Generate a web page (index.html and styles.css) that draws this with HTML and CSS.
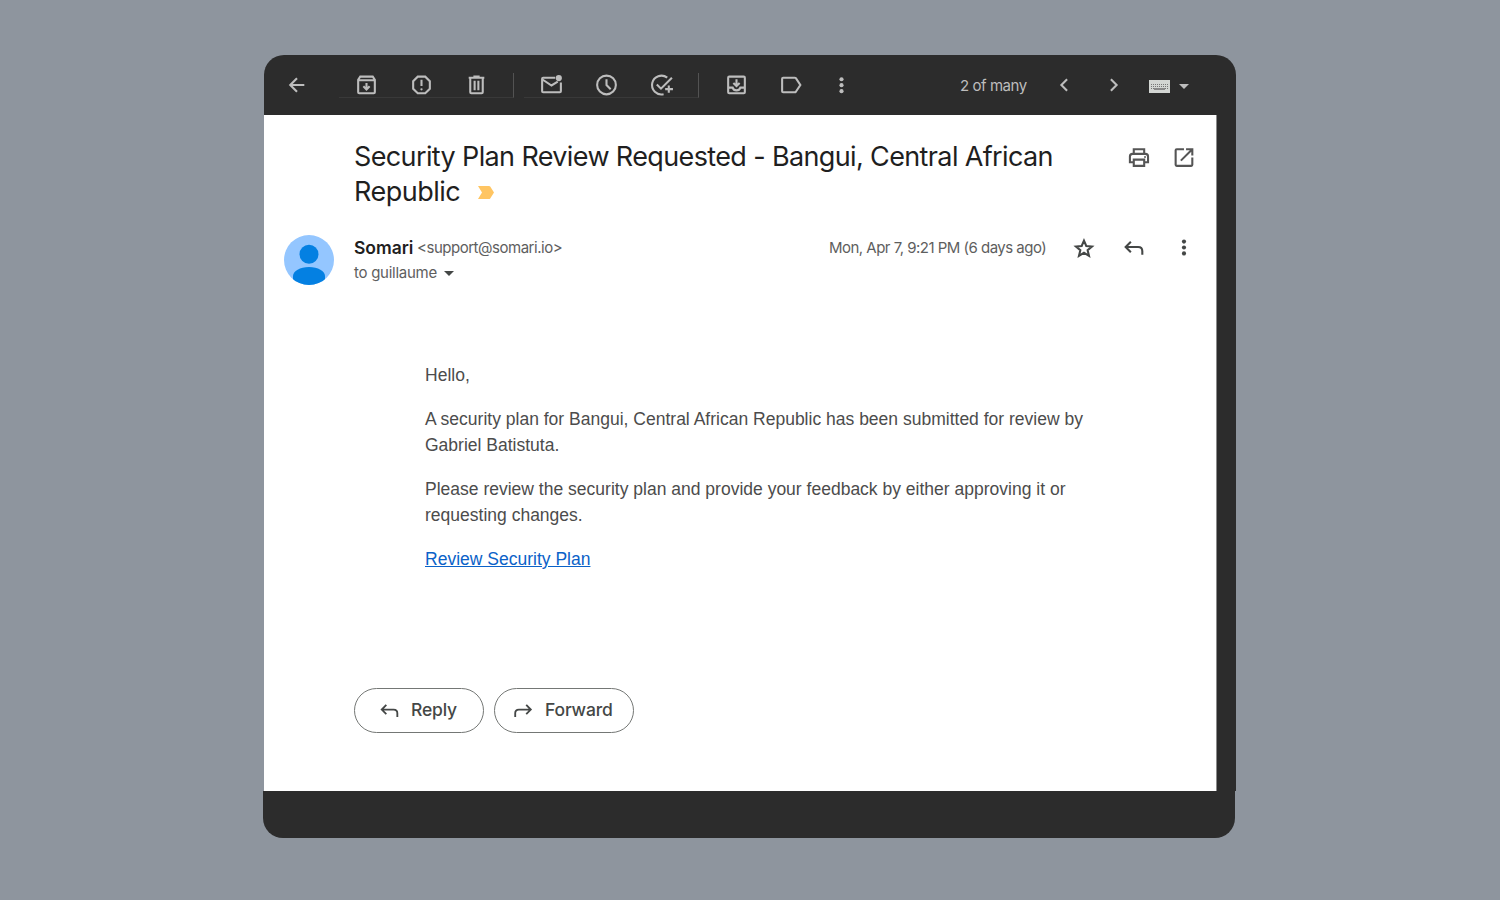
FILE: index.html
```html
<!DOCTYPE html>
<html lang="en">
<head>
<meta charset="utf-8">
<title>Security Plan Review Requested</title>
<link rel="stylesheet" href="styles.css">
</head>
<body>
<main class="window">
  <header class="toolbar">
    <svg class="icon back" viewBox="0 0 24 24"><path d="M19.500 11.500H6M12.500 5l-6.500 6.500 6.500 6.500"/></svg>
    <div class="group">
      <svg class="icon" viewBox="0 0 24 24"><path d="M4 6.500v12q0 1 1 1h14q1 0 1-1v-12l-2-3H6zM4 7h16M12 9.500v6M9 12.800l3 3 3-3"/></svg>
      <svg class="icon" viewBox="0 0 24 24"><path d="M8.400 3.500h7.200L20 7.900v7.200l-4.400 4.400H8.400L4 15.100V7.900zM12 6.500v6"/><circle class="solid" cx="12" cy="15.700" r="1.100"/></svg>
      <svg class="icon" viewBox="0 0 24 24"><path d="M6 4.500v14q0 1 1 1h10q1 0 1-1v-14M4.500 4.500h15M9 3.500h6M10.200 7.500v9M13.800 7.500v9"/></svg>
    </div>
    <div class="group second">
      <svg class="icon" viewBox="0 0 24 24"><path d="M15.500 4.500H4q-1 0-1 1v12q0 1 1 1h16q1 0 1-1V9M3 6l9 6 6-3.800"/><circle class="solid" cx="19" cy="4.800" r="3"/></svg>
      <svg class="icon" viewBox="0 0 24 24"><circle cx="12" cy="11.500" r="9"/><path d="M12 6v5.500l4 4"/></svg>
      <svg class="icon" viewBox="0 0 24 24"><path d="M17.500 4.500A9 9 0 1 0 14 20.300M7.500 11l4 4L22 4.500M19 12v7M15.500 15.500h7.500"/></svg>
    </div>
    <svg class="icon move" viewBox="0 0 24 24"><rect x="4" y="3.500" width="16" height="16" rx="1"/><path d="M4 14h4.300c.5 1.700 2 2.700 3.700 2.700s3.200-1 3.700-2.700H20M12 6v6M9 9.500l3 3 3-3"/></svg>
    <svg class="icon label" viewBox="0 0 24 24"><path d="M4 4.500h11q.8 0 1.200.5l4.300 6.500-4.300 6.500q-.4.500-1.200.500H4q-1 0-1-1v-12q0-1 1-1z"/></svg>
    <svg class="icon more" viewBox="0 0 24 24"><circle class="solid" cx="12" cy="6" r="2"/><circle class="solid" cx="12" cy="11.700" r="2"/><circle class="solid" cx="12" cy="17.400" r="2"/></svg>
    <span class="count">2 of many</span>
    <svg class="icon prev" viewBox="0 0 24 24"><path d="M14.500 6L9 11.500l5.500 5.500"/></svg>
    <svg class="icon next" viewBox="0 0 24 24"><path d="M9.500 6l5.500 5.500L9.500 17"/></svg>
    <svg class="keyboard" viewBox="0 0 21 13"><path class="board" d="M0 0h21v13H0z"/><path class="keys" d="M2 4.500h17M2 6.500h17M2 8.500h3M16 8.500h3"/><path class="space" d="M5 9h11"/></svg>
    <svg class="caret" viewBox="0 0 10 5"><path d="M0 0h10L5 5z"/></svg>
  </header>
  <article class="mail">
    <div class="heading">
      <h1 class="subject"><span class="first-line">Security Plan Review Requested - Bangui, Central African</span><br><span class="last-line">Republic</span><svg class="important" viewBox="0 0 16 13"><path d="M0 0h11q.8 0 1.200.6L16 6.500l-3.800 5.900q-.4.600-1.200.600H0l4-6.500z"/></svg></h1>
      <div class="heading-actions">
        <svg class="icon" viewBox="0 0 24 24"><path d="M6.500 8V4h10v4M6.500 16.500H2.800V11q0-2.500 2.500-2.500h12.400q2.500 0 2.500 2.500v5.500h-3.700M6.500 14h10v6h-10z"/><circle class="solid" cx="17.300" cy="11.500" r=".9"/></svg>
        <svg class="icon" viewBox="0 0 24 24"><path d="M11.500 4h-7q-1 0-1 1v14q0 1 1 1h14q1 0 1-1v-7M13.500 4h6v6M8.500 15l11-11"/></svg>
      </div>
    </div>
    <div class="sender">
      <svg class="avatar" viewBox="0 0 50 50"><defs><clipPath id="disc"><circle cx="25" cy="25" r="25"/></clipPath></defs><g clip-path="url(#disc)"><path class="disc" d="M0 0h50v50H0z"/><circle cx="25" cy="19.300" r="9.500"/><path d="M9 50v-9c0-5 7-9 16-9s16 4 16 9v9z"/></g></svg>
      <div class="who">
        <div class="from"><span class="name">Somari</span><span class="address">&lt;support@somari.io&gt;</span></div>
        <div class="to"><span class="recipient">to guillaume</span><svg class="caret" viewBox="0 0 10 5"><path d="M0 0h10L5 5z"/></svg></div>
      </div>
      <div class="meta">
        <span class="date">Mon, Apr 7, 9:21 PM (6 days ago)</span>
        <svg class="icon star" viewBox="0 0 24 24"><path d="M11.500 5.400l2.200 5.100 5.500.5-4.200 3.600 1.300 5.400-4.800-2.900-4.800 2.900L8 14.600 3.800 11l5.500-.5z"/></svg>
        <svg class="icon reply" viewBox="0 0 24 24"><path d="M19.500 19v-3.500q0-4-4-4H4M8.500 6.500l-5 5 5 5"/></svg>
        <svg class="icon" viewBox="0 0 24 24"><circle class="solid" cx="11.500" cy="6.300" r="2"/><circle class="solid" cx="11.500" cy="12" r="2"/><circle class="solid" cx="11.500" cy="17.700" r="2"/></svg>
      </div>
    </div>
    <div class="message">
      <p>Hello,</p>
      <p>A security plan for Bangui, Central African Republic has been submitted for review by Gabriel Batistuta.</p>
      <p>Please review the security plan and provide your feedback by either approving it or requesting changes.</p>
      <p><a class="link" href="#">Review Security Plan</a></p>
    </div>
    <div class="buttons">
      <button class="button reply-button"><svg class="icon" viewBox="0 0 24 24"><path d="M20 19.500v-4q0-4-4-4H3.500M8 6.500l-5 5 5 5"/></svg><span>Reply</span></button>
      <button class="button forward-button"><svg class="icon" viewBox="0 0 24 24"><path d="M3.500 19.500v-4q0-4 4-4H20M15.500 6.500l5 5-5 5"/></svg><span>Forward</span></button>
    </div>
  </article>
</main>
<footer class="base"></footer>
</body>
</html>
```

FILE: styles.css
```css
* { box-sizing: border-box; }
body {
  margin: 0;
  height: 900px;
  padding: 55px 264px 0;
  overflow: hidden;
  background: #8e959e;
  font-family: Inter, Roboto, sans-serif;
}
.window {
  width: 972px;
  height: 736px;
  background: #2c2c2c;
  border-radius: 20px 20px 0 0;
}
.base {
  width: 972px;
  height: 47px;
  margin-left: -1px;
  background: #2c2c2c;
  border-radius: 0 0 20px 20px;
}
.icon {
  display: block;
  flex: none;
  width: 25px;
  height: 25px;
  fill: none;
  stroke: currentColor;
  stroke-width: 2;
}
.solid { fill: currentColor; stroke: none; }
.caret { display: block; width: 10px; height: 5px; fill: currentColor; }

.toolbar {
  display: flex;
  align-items: center;
  height: 60px;
  padding-left: 20px;
  color: #bdbdbd;
}
.back { margin-right: 30px; }
.group {
  display: flex;
  gap: 30px;
  width: 175px;
  height: 25px;
  padding-left: 15px;
  border-right: 1px solid #535353;
  border-bottom: 1px solid #393939;
}
.second { margin-left: 10px; }
.move { margin-left: 25px; }
.label { margin-left: 30px; }
.more { margin-left: 25px; }
.count {
  width: 68px;
  margin-left: 106px;
  padding-top: 1px;
  font-size: 15px;
  letter-spacing: -0.45px;
  white-space: nowrap;
}
.prev { margin-left: 24px; }
.next { margin-left: 24px; }
.keyboard { width: 21px; height: 13px; margin: 3px 9px 0 23px; }
.board { fill: #d3d6d3; }
.keys { fill: none; stroke: #777; stroke-width: 1; stroke-dasharray: 1 1; }
.space { fill: none; stroke: #888; stroke-width: 2; }
.toolbar .caret { margin-top: 2px; }

.mail {
  width: 953px;
  height: 676px;
  background: #fff;
  border-right: 1px solid #8b8b8b;
  color: #444746;
}
.heading {
  display: flex;
  justify-content: space-between;
  height: 120px;
  padding: 24px 19px 0 90px;
}
.subject {
  margin: 0;
  color: #1f1f1f;
  font-size: 27px;
  font-weight: 400;
  line-height: 35px;
  white-space: nowrap;
}
.first-line { letter-spacing: -0.63px; }
.last-line { letter-spacing: -0.5px; }
.important { width: 16px; height: 13px; margin-left: 18px; vertical-align: 2px; fill: #ffc562; }
.heading-actions { display: flex; gap: 20px; padding-top: 6px; color: #555; }
.sender {
  display: flex;
  height: 50px;
  padding: 0 19px 0 20px;
}
.avatar { width: 50px; height: 50px; fill: #0480e2; }
.disc { fill: #94c6ff; }
.who { padding-left: 20px; }
.from, .to { display: flex; align-items: center; height: 25px; white-space: nowrap; }
.name { width: 63px; color: #1f1f1f; font-size: 17.5px; font-weight: 600; letter-spacing: -0.05px; }
.address, .recipient, .date { color: #5e5e5e; font-size: 15px; }
.address { letter-spacing: -0.48px; }
.recipient { width: 90px; letter-spacing: -0.27px; }
.to .caret { margin-top: 1px; }
.meta { display: flex; align-items: center; height: 25px; margin-left: auto; }
.date { width: 218px; letter-spacing: -0.52px; white-space: nowrap; }
.star { margin-left: 25px; }
.reply { margin: 0 25px; }
.message {
  width: 700px;
  padding: 77px 0 0 161px;
  box-sizing: content-box;
  color: #4c4c4c;
  font: 17.5px/26px "Liberation Sans", Arial, sans-serif;
}
.message p { width: 680px; margin: 0 0 18px; letter-spacing: 0.005px; }
.link { color: #0b62c8; text-decoration: underline; }
.buttons { display: flex; gap: 10px; padding: 98px 0 0 90px; }
.button {
  display: flex;
  align-items: center;
  height: 45px;
  padding: 0 0 2px;
  border: 1px solid #747775;
  border-radius: 23px;
  background: #fff;
  color: #444746;
  font: 500 17.5px Inter, Roboto, sans-serif;
}
.button .icon { width: 22px; height: 22px; margin-top: 1px; }
.reply-button { width: 130px; padding-left: 24px; gap: 10px; }
.forward-button { width: 140px; padding-left: 17px; gap: 11px; }
.button span { letter-spacing: -0.18px; }
```
